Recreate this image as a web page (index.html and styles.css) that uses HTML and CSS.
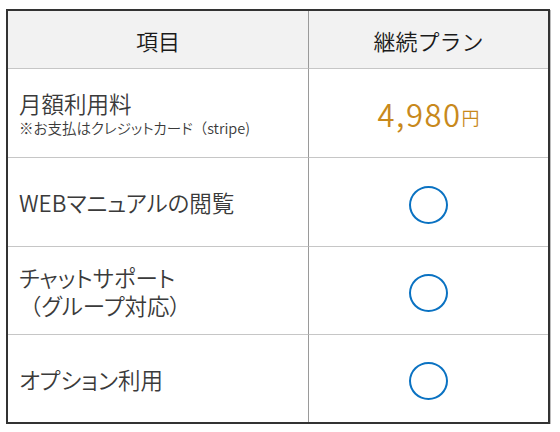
FILE: index.html
```html
<!DOCTYPE html>
<html lang="ja">
<head>
<meta charset="utf-8">
<link rel="stylesheet" href="styles.css">
</head>
<body>
<div class="plan">
  <div class="cell head item">項目</div>
  <div class="cell head plan-col">継続プラン</div>

  <div class="cell item">
    <div class="label">月額利用料</div>
    <div class="note">※お支払はクレジットカード<span class="full">（</span>stripe)</div>
  </div>
  <div class="cell plan-col"><span class="price">4,980</span><span class="yen">円</span></div>

  <div class="cell item"><div class="label">WEBマニュアルの閲覧</div></div>
  <div class="cell plan-col"><span class="mark"></span></div>

  <div class="cell item">
    <div class="label">チャットサポート</div>
    <div class="label"><span class="full">（</span>グループ対応）</div>
  </div>
  <div class="cell plan-col"><span class="mark"></span></div>

  <div class="cell item"><div class="label">オプション利用</div></div>
  <div class="cell plan-col"><span class="mark"></span></div>
</div>
</body>
</html>
```

FILE: styles.css
```css
html, body {
  margin: 0;
  background: #ffffff;
}
body {
  padding: 9px 0 0 6px;
  font-family: "Noto Sans CJK JP", "Noto Sans", sans-serif;
}
.plan {
  display: grid;
  grid-template-columns: 301px 239px;
  grid-template-rows: 57px 89px 89px 88px 88px;
  width: 540px;
  border: 2px solid #333333;
  box-shadow: 1px 1px 0 #bdbdbd;
}
.cell {
  display: flex;
  align-items: center;
  border-top: 1px solid #c6c6c6;
}
.cell.head {
  border-top: none;
  background: #f2f2f2;
  justify-content: center;
  font-size: 22px;
  font-weight: 350;
  color: #1a1a1a;
}
.cell.item {
  border-right: 1px solid #9a9a9a;
}
.cell:not(.head).item {
  flex-direction: column;
  align-items: flex-start;
  justify-content: center;
  padding-left: 11px;
}
.cell.plan-col {
  justify-content: center;
}
.label {
  font-size: 22.5px;
  line-height: 28px;
  font-weight: 350;
  color: #3a3a3a;
  font-feature-settings: "palt";
}
.note {
  font-size: 14.5px;
  line-height: 20px;
  font-weight: 350;
  color: #3a3a3a;
  font-feature-settings: "palt";
  margin-top: 1px;
}
.full {
  font-feature-settings: normal;
}
.price {
  font-size: 31px;
  font-weight: 350;
  color: #c8891c;
  letter-spacing: 1.5px;
  line-height: 1;
}
.yen {
  font-size: 18px;
  font-weight: 350;
  color: #c8891c;
  margin-top: 8px;
}
.mark {
  width: 35px;
  height: 34px;
  border: 2px solid #0a72c2;
  border-radius: 50%;
  margin-top: 5px;
}
```
